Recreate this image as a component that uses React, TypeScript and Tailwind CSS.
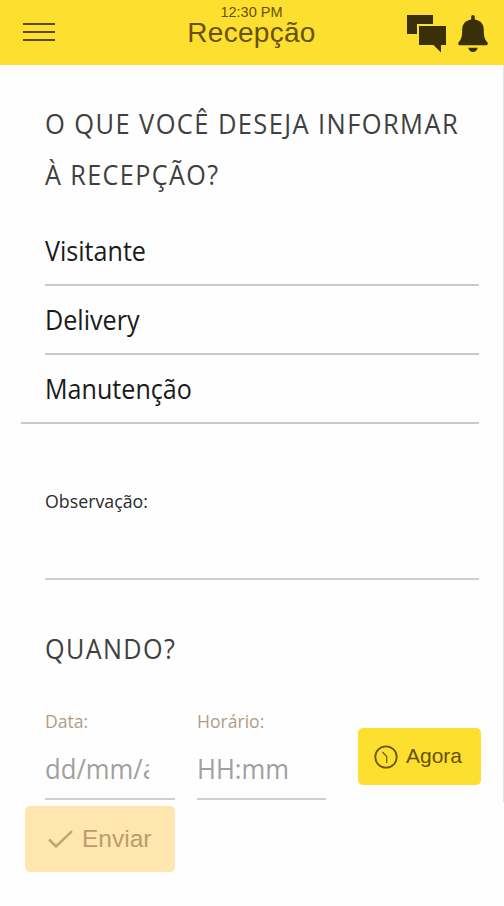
import type { ReactNode } from 'react'

const options = ['Visitante', 'Delivery', 'Manutenção']

function MenuIcon() {
  return (
    <svg width="32" height="18" viewBox="0 0 32 18" className="block">
      <path d="M0 1h32M0 9h32M0 17h32" stroke="#5b4a08" strokeWidth="2" />
    </svg>
  )
}

function ChatIcon() {
  return (
    <svg width="40" height="38" viewBox="0 0 40 38" className="block" fill="#392f08">
      <path d="M0 0h26v9H10v10H0z" />
      <path d="M12 11h27v19h-5v7.500L26.500 30H12z" />
    </svg>
  )
}

function BellIcon() {
  return (
    <svg width="30" height="38" viewBox="0 0 30 38" className="block" fill="#392f08">
      <path d="M15 0c1.100 0 1.800.8 1.800 2v2.400c5.600.8 9 4.600 9 10.200 0 6.500.6 9.400 3.200 12.200.6.700.9 1.200.8 2 0 .9-.6 1.400-1.500 1.400H1.700c-.9 0-1.500-.5-1.500-1.400 0-.8.300-1.300.8-2 2.600-2.800 3.200-5.700 3.200-12.200 0-5.600 3.400-9.400 9-10.200V2c0-1.200.7-2 1.800-2z" />
      <path d="M10.300 32.800h9.400c-.5 2.600-2.300 4.200-4.700 4.200s-4.200-1.600-4.700-4.200z" />
    </svg>
  )
}

function ClockIcon() {
  return (
    <svg width="24" height="24" viewBox="0 0 24 24" className="block" fill="none" stroke="#6b580d">
      <circle cx="12" cy="12" r="10.700" strokeWidth="1.800" />
      <path d="M8.500 7l4.200 4.500V18" strokeWidth="1.200" />
    </svg>
  )
}

function CheckIcon() {
  return (
    <svg width="25" height="19" viewBox="0 0 25 19" className="block" fill="none" stroke="#c0a66f">
      <path d="M1 9.500l7 7L24 1.200" strokeWidth="2.500" />
    </svg>
  )
}

interface FieldProps {
  label: string
  width: string
  children: ReactNode
}

function Field({ label, width, children }: FieldProps) {
  return (
    <div className={width}>
      <div className="h-[26px] text-[18.500px] leading-[26px] text-[#b39b87]">
        <span className="inline-block origin-left scale-x-[0.95]">{label}</span>
      </div>
      <div className="mt-[16px] h-[50px] border-b-2 border-[#cfcfcf] text-[27px] leading-[37px] text-[#a0a0a0]">
        {children}
      </div>
    </div>
  )
}

export default function App() {
  return (
    <div className="flex h-[906px] w-[504px] flex-col overflow-hidden bg-[#fefefe] font-['Open_Sans','Noto_Sans',sans-serif]">
      <header className="flex h-[65px] shrink-0 bg-[#fddf2f] pr-[16px] pl-[23px] font-['Liberation_Sans',Arial,sans-serif] text-[#665208]">
        <div className="w-[98px] pt-[23px]">
          <MenuIcon />
        </div>
        <div className="flex w-[261px] flex-col items-center">
          <span className="mt-[5px] text-[14.500px] leading-[14px] whitespace-nowrap">12:30 PM</span>
          <h1 className="text-[28px] leading-[27px] tracking-[0.3px] whitespace-nowrap">Recepção</h1>
        </div>
        <div className="ml-auto flex gap-[11px] pt-[15px]">
          <ChatIcon />
          <BellIcon />
        </div>
      </header>

      <main className="h-[737px] shrink-0 border-r border-[#e4e4e8] pt-[33px] pr-[24px] pl-[45px]">
        <h2 className="text-[27px] leading-[51px] tracking-[1.500px] whitespace-nowrap text-[#404040]">
          <span className="block origin-left scale-x-[0.943]">O QUE VOCÊ DESEJA INFORMAR</span>
          <span className="block origin-left scale-x-[0.932]">À RECEPÇÃO?</span>
        </h2>

        <ul className="mt-[17px] text-[27px] leading-[67px] text-[#1a1a1a]">
          {options.map((option) => (
            <li key={option} className="h-[69px] border-b-2 border-[#cacaca] last:-ml-[24px] last:pl-[24px]">
              <span className="inline-block origin-left scale-x-[0.93]">{option}</span>
            </li>
          ))}
        </ul>

        <div className="mt-[64px] h-[92px] border-b-2 border-[#cfcfcf] text-[19px] leading-[26px] text-[#2b2b2b]">
          <span className="inline-block origin-left scale-x-[0.935]">Observação:</span>
        </div>

        <h2 className="mt-[43px] text-[27px] leading-[51px] tracking-[1.500px] text-[#404040]">
          <span className="inline-block origin-left scale-x-[0.932]">QUANDO?</span>
        </h2>

        <div className="-mr-[2px] mt-[34px] flex">
          <Field label="Data:" width="w-[130px] shrink-0">
            <div className="w-[104px] overflow-hidden">
              <span className="inline-block origin-left scale-x-[0.95]">dd/mm/aaaa</span>
            </div>
          </Field>
          <div className="w-[22px] shrink-0" />
          <Field label="Horário:" width="w-[129px] shrink-0">
            <span className="inline-block origin-left scale-x-[0.95]">HH:mm</span>
          </Field>
          <button
            type="button"
            className="mt-[20px] ml-[32px] flex h-[57px] w-[123px] shrink-0 items-center rounded-[5px] bg-[#fddf2f] pl-[16px] font-['Liberation_Sans',Arial,sans-serif] text-[21px] text-[#665208]"
          >
            <ClockIcon />
            <span className="ml-[8px] pb-[2px]">Agora</span>
          </button>
        </div>
      </main>

      <button
        type="button"
        className="mt-[4px] ml-[25px] flex h-[66px] w-[150px] shrink-0 items-center rounded-[5px] bg-[#ffe6ae] pl-[23px] font-['Liberation_Sans',Arial,sans-serif] text-[24.500px] text-[#b89e6c]"
      >
        <CheckIcon />
        <span className="ml-[9px] pt-px">Enviar</span>
      </button>
    </div>
  )
}
